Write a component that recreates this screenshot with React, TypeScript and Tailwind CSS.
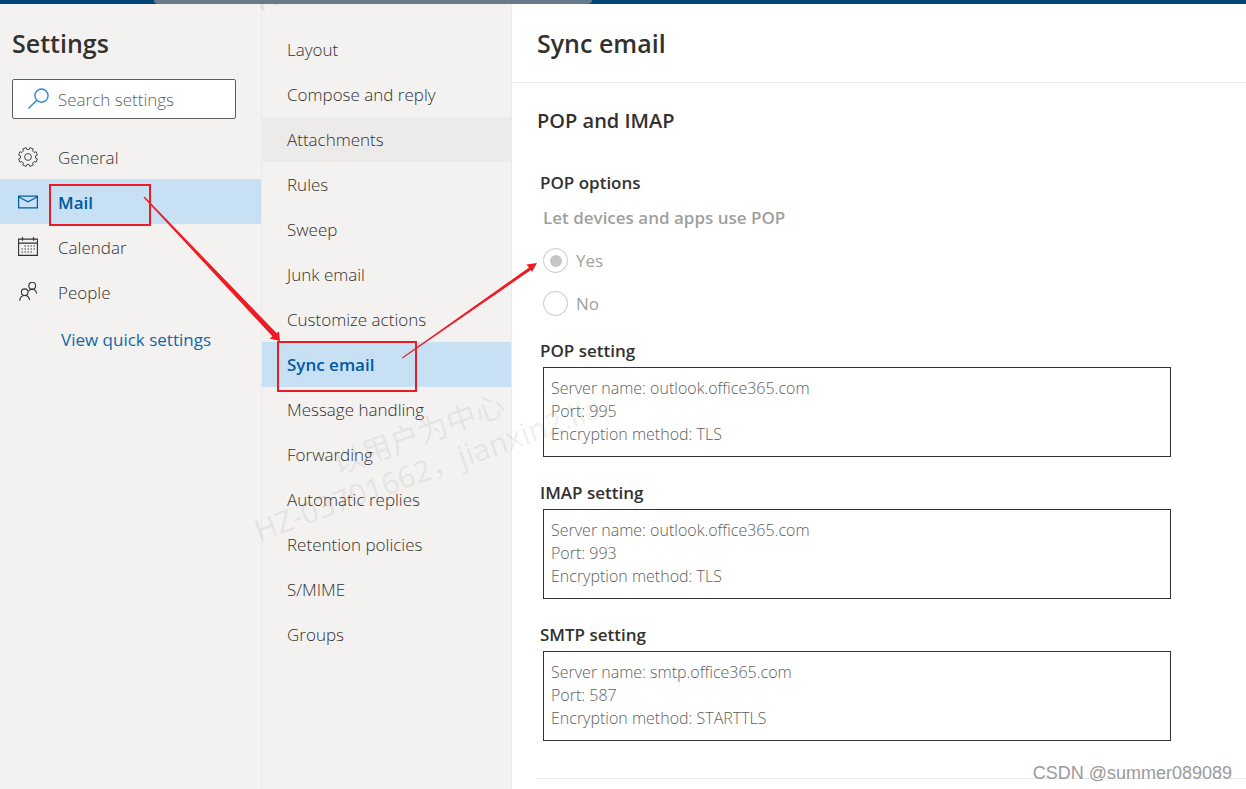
import React from "react";
import type { ReactNode } from "react";

const categories: { name: string; icon: ReactNode }[] = [
  { name: "General", icon: <GearIcon /> },
  { name: "Mail", icon: <MailIcon /> },
  { name: "Calendar", icon: <CalendarIcon /> },
  { name: "People", icon: <PeopleIcon /> },
];

const sections = [
  "Layout",
  "Compose and reply",
  "Attachments",
  "Rules",
  "Sweep",
  "Junk email",
  "Customize actions",
  "Sync email",
  "Message handling",
  "Forwarding",
  "Automatic replies",
  "Retention policies",
  "S/MIME",
  "Groups",
];

const servers = [
  { title: "POP setting", host: "outlook.office365.com", port: 995, method: "TLS" },
  { title: "IMAP setting", host: "outlook.office365.com", port: 993, method: "TLS" },
  { title: "SMTP setting", host: "smtp.office365.com", port: 587, method: "STARTTLS" },
];

function GearIcon() {
  const teeth = 8;
  const points: string[] = [];
  for (let i = 0; i < teeth; i++) {
    const base = (i * 2 * Math.PI) / teeth;
    for (const [offset, radius] of [
      [-0.25, 7.6],
      [-0.19, 9.6],
      [0.19, 9.6],
      [0.25, 7.6],
    ]) {
      const a = base + offset + Math.PI / 8;
      points.push(`${(10 + radius * Math.cos(a)).toFixed(2)},${(10 + radius * Math.sin(a)).toFixed(2)}`);
    }
  }
  return (
    <svg viewBox="0 0 20 20" className="size-5" fill="none" stroke="currentColor" strokeWidth="0.9" strokeLinejoin="round" aria-hidden="true">
      <polygon points={points.join(" ")} />
      <circle cx="10" cy="10" r="3.4" />
    </svg>
  );
}

function MailIcon() {
  return (
    <svg viewBox="0 0 20 20" className="size-5" fill="none" stroke="currentColor" strokeWidth="1.2" aria-hidden="true">
      <path d="M.6 4.2h18.8v11.6H.6zM.8 5l9.2 4.800 9.200-4.800" />
    </svg>
  );
}

function CalendarIcon() {
  return (
    <svg viewBox="0 0 20 20" className="size-5" fill="none" stroke="currentColor" strokeWidth="1.1" aria-hidden="true">
      <path d="M.6 2.1h18.8v16.300H.6zM.6 6.100h18.8M4.500 0v3.800M15.500 0v3.800" />
      <path d="M6.500 9H17M3.500 12H17M3.500 15H14" strokeWidth="1.2" strokeDasharray="1.400 1.600" />
    </svg>
  );
}

function PeopleIcon() {
  return (
    <svg viewBox="0 0 20 20" className="size-5" fill="none" stroke="currentColor" strokeWidth="1.1" aria-hidden="true">
      <circle cx="6.700" cy="10.200" r="3.300" />
      <circle cx="14.200" cy="3.700" r="3.400" />
      <path d="M1.800 18.700c0-3.200 2-5.200 4.900-5.200s4.500 1.900 4.800 4.600M10.600 9.100c.8-1.200 2-1.900 3.600-1.900 2.600 0 4.100 1.700 4.400 4.300" />
    </svg>
  );
}

function SearchIcon() {
  return (
    <svg viewBox="0 0 22 22" className="size-[22px] shrink-0 text-[#2b88d8]" fill="none" stroke="currentColor" strokeWidth="1.4" aria-hidden="true">
      <circle cx="13.500" cy="7.600" r="6.600" />
      <path d="M8.800 12.300.400 20.600" />
    </svg>
  );
}

function Annotations() {
  return (
    <svg className="pointer-events-none absolute top-0 left-0" width="640" height="600" viewBox="0 0 640 600" aria-hidden="true">
      <g fill="#646464" fillOpacity="0.11" fontWeight="400" fontFamily="'Noto Sans', 'Noto Sans CJK SC', sans-serif">
        <text transform="translate(338 475) rotate(-20)" fontSize="30">以用户为中心</text>
        <text transform="translate(259 542) rotate(-20)" fontSize="30">HZ-03701662，jianxin2.lia</text>
        <path d="M260 4h3l2 7h-3zM275 4h4v1l-4 1z" />
      </g>
      <g fill="none" stroke="#ed1c24" strokeWidth="2">
        <rect x="50" y="185" width="100" height="40" />
        <rect x="278" y="342" width="138" height="49" />
      </g>
      <g fill="#ed1c24">
        <path d="M143.500 197.500 144.500 196.500 276.500 333 279 331.500 280 341 269.500 338.500 272.500 336.500Z" />
        <path d="M402.500 358.500 402 357.500 529 267.500 526.500 264.500 537 263 532 272 531 270Z" />
      </g>
    </svg>
  );
}

export default function App() {
  return (
    <div className="relative flex min-h-screen flex-col overflow-hidden bg-white font-['Open_Sans','Noto_Sans_CJK_SC',sans-serif] text-[17px] font-light text-[#323130]">
      <div className="flex h-1 bg-[#004578]">
        <div className="ml-[154px] w-[438px] rounded-b bg-[#667a8a]" />
      </div>
      <div className="flex grow">
        <aside className="w-[262px] shrink-0 border-r border-[#eaeaea] bg-[#f3f2f1]">
          <h1 className="px-3 pt-[23px] text-[25px] leading-[33px] font-semibold">Settings</h1>
          <label className="mx-3 mt-[19px] mr-[25px] flex h-10 items-center gap-2 rounded-xs border border-[#605e5c] bg-white pl-[15px]">
            <SearchIcon />
            <input
              type="search"
              aria-label="Search settings"
              placeholder="Search settings"
              className="w-full min-w-0 bg-transparent pt-px outline-none placeholder:text-[#605e5c]"
            />
          </label>
          <nav className="mt-[15px]">
            {categories.map(({ name, icon }) => (
              <button
                key={name}
                type="button"
                className={`flex h-[45px] w-full items-center gap-5 rounded-r-xs pl-[18px] ${
                  name === "Mail" ? "bg-[#c7e0f4] font-semibold text-[#005a9e]" : ""
                }`}
              >
                {icon}
                <span className="pt-0.5">{name}</span>
              </button>
            ))}
          </nav>
          <a href="#quick" className="mt-[13px] ml-[61px] inline-block font-normal text-[#1267a8]">
            View quick settings
          </a>
        </aside>
        <nav className="w-[250px] shrink-0 border-r border-[#eaeaea] bg-[#f3f2f1] pt-[23px]">
          {sections.map((name) => (
            <button
              key={name}
              type="button"
              className={`flex h-[45px] w-full items-center pl-[25px] ${
                name === "Sync email" ? "bg-[#c7e0f4] font-semibold text-[#005a9e]" : name === "Attachments" ? "bg-[#edebe9]" : ""
              }`}
            >
              {name}
            </button>
          ))}
        </nav>
        <main className="min-w-0 grow">
          <h2 className="border-b border-[#eaeaea] px-[25px] pt-[23px] pb-[22px] text-[25px] leading-[33px] font-semibold">Sync email</h2>
          <h3 className="mt-[23px] pl-[25px] text-xl leading-[30px] font-semibold">POP and IMAP</h3>
          <div className="pt-[35px] pr-[75px] pl-7">
            <h4 className="leading-6 font-semibold">POP options</h4>
            <fieldset disabled className="mt-[11px] pl-[3px] text-[#a19f9d]">
              <legend className="leading-6 font-semibold">Let devices and apps use POP</legend>
              {["Yes", "No"].map((option) => (
                <label key={option} className="mt-[18px] flex h-[25px] items-center gap-2 font-normal">
                  <input
                    type="radio"
                    name="pop"
                    defaultChecked={option === "Yes"}
                    className="grid size-[25px] appearance-none place-items-center rounded-full border border-[#c8c6c4] before:size-3 before:rounded-full checked:before:bg-[#c8c6c4]"
                  />
                  <span>{option}</span>
                </label>
              ))}
            </fieldset>
            <div className="mt-[23px] flex flex-col gap-6">
              {servers.map(({ title, host, port, method }) => (
                <section key={title}>
                  <h4 className="leading-6 font-semibold">{title}</h4>
                  <div className="mt-1 ml-[3px] h-[90px] border border-[#323130] px-[7px] py-[9px] text-base leading-[23px] text-[#605e5c]">
                    <p>Server name: {host}</p>
                    <p>Port: {port}</p>
                    <p>Encryption method: {method}</p>
                  </div>
                </section>
              ))}
            </div>
          </div>
          <hr className="mt-[37px] ml-[25px] border-[#eaeaea]" />
        </main>
      </div>
      <Annotations />
      <p className="absolute right-[14px] bottom-1 font-['Liberation_Sans',sans-serif] text-lg leading-6 font-normal text-[#9a9a9a]">CSDN @summer089089</p>
    </div>
  );
}
